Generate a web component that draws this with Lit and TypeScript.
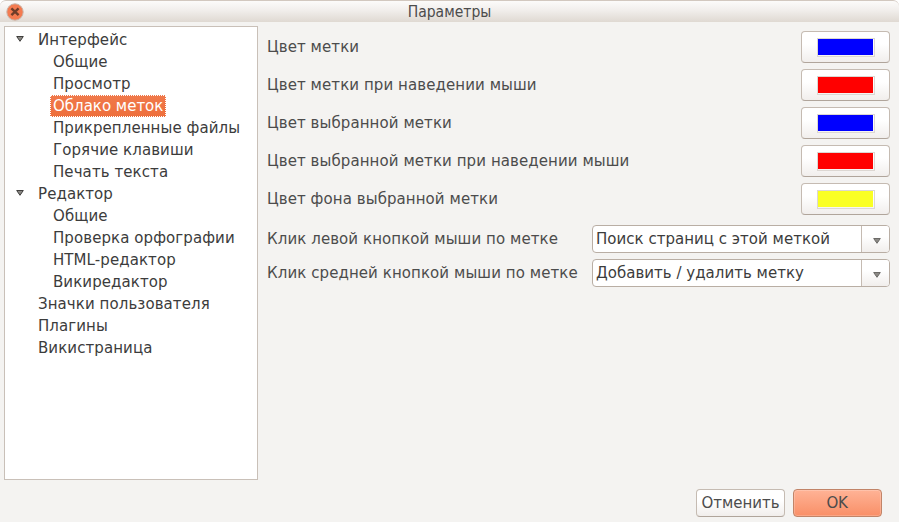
import { LitElement, html, css, svg } from "lit";
import { customElement, state } from "lit/decorators.js";
import { classMap } from "lit/directives/class-map.js";
import { styleMap } from "lit/directives/style-map.js";

interface TreeItem {
  label: string;
  level: number;
  open?: boolean;
}

const TREE: TreeItem[] = [
  { label: "Интерфейс", level: 0, open: true },
  { label: "Общие", level: 1 },
  { label: "Просмотр", level: 1 },
  { label: "Облако меток", level: 1 },
  { label: "Прикрепленные файлы", level: 1 },
  { label: "Горячие клавиши", level: 1 },
  { label: "Печать текста", level: 1 },
  { label: "Редактор", level: 0, open: true },
  { label: "Общие", level: 1 },
  { label: "Проверка орфографии", level: 1 },
  { label: "HTML-редактор", level: 1 },
  { label: "Викиредактор", level: 1 },
  { label: "Значки пользователя", level: 0 },
  { label: "Плагины", level: 0 },
  { label: "Викистраница", level: 0 },
];

const COLORS = [
  { label: "Цвет метки", color: "#0000ff" },
  { label: "Цвет метки при наведении мыши", color: "#ff0000" },
  { label: "Цвет выбранной метки", color: "#0000ff" },
  { label: "Цвет выбранной метки при наведении мыши", color: "#ff0000" },
  { label: "Цвет фона выбранной метки", color: "#faff24" },
];

const ACTIONS = [
  { label: "Клик левой кнопкой мыши по метке", value: "Поиск страниц с этой меткой" },
  { label: "Клик средней кнопкой мыши по метке", value: "Добавить / удалить метку" },
];

@customElement("app-root")
export class AppRoot extends LitElement {
  @state() private selected = 3;

  static styles = css`
    :host {
      display: flex;
      flex-direction: column;
      box-sizing: border-box;
      width: 899px;
      height: 522px;
      overflow: hidden;
      background: #f4f3f1;
      color: #4c4c4c;
      font: 15px/22px "DejaVu Sans", sans-serif;
      white-space: nowrap;
    }
    * {
      box-sizing: border-box;
    }
    svg {
      display: block;
    }
    .corners {
      background: #fff;
      flex: none;
    }
    .titlebar {
      display: grid;
      grid-template-columns: 30px 1fr 30px;
      align-items: center;
      height: 22px;
      border-top: 1px solid #d2c8bf;
      border-radius: 6px 6px 0 0;
      background: linear-gradient(#fcfbfa, #f1eeeb 45%, #dfd9d2);
      text-align: center;
    }
    .title {
      font-size: 15.5px;
      font-family: "DejaVu Sans Condensed", "DejaVu Sans", sans-serif;
      font-stretch: condensed;
    }
    .close {
      padding-left: 6px;
    }
    .body {
      display: flex;
      flex: 1;
      padding: 4px 9px 0 4px;
      gap: 9px;
    }
    .tree {
      width: 254px;
      height: 454px;
      padding: 2px 0 0 10px;
      border: 1px solid #c9c0b8;
      background: #fff;
      color: #3c3c3c;
      letter-spacing: 0.08px;
    }
    .node {
      display: flex;
      align-items: center;
      height: 22px;
    }
    .arrow {
      width: 20px;
      padding: 0 0 3px 1px;
    }
    .child .arrow {
      width: 35px;
    }
    .name {
      height: 22px;
      padding: 0 3px;
      line-height: 23px;
    }
    .selected .name {
      background: linear-gradient(#f0794b, #ee6f3c);
      outline: 1px dotted #fff;
      outline-offset: -1px;
      color: #fff;
      letter-spacing: 0;
    }
    .options {
      flex: 1;
      padding-top: 5px;
    }
    .row {
      display: flex;
      justify-content: space-between;
      align-items: center;
      height: 32px;
      margin-bottom: 6px;
    }
    .label {
      letter-spacing: 0.08px;
    }
    .row.action {
      height: 28px;
    }
    .row.first {
      margin-top: 10px;
    }
    .button {
      display: flex;
      align-items: center;
      justify-content: center;
      width: 89px;
      height: 28px;
      border: 1px solid #c5bbb2;
      border-bottom-color: #b0a59b;
      border-radius: 4px;
      background: linear-gradient(#fff 40%, #f1eeec);
    }
    .pick {
      height: 32px;
    }
    .swatch {
      width: 58px;
      height: 19px;
      border: 1px solid #dcd7d2;
      box-shadow: inset 0 0 0 0 #fff;
      padding: 0 1px 1px 0;
      background-clip: content-box;
    }
    .combo {
      display: flex;
      width: 298px;
      height: 28px;
      border: 1px solid #b9aea4;
      border-radius: 4px;
      background: #fff;
      color: #3c3c3c;
      overflow: hidden;
    }
    .value {
      flex: 1;
      padding: 2px 0 0 3px;
      letter-spacing: 0.02px;
    }
    .drop {
      display: flex;
      align-items: center;
      justify-content: center;
      width: 28px;
      padding: 4px 0 0 2px;
      border-left: 1px solid #c5bbb2;
      background: linear-gradient(#fff 40%, #f1eeec);
    }
    .footer {
      display: flex;
      justify-content: flex-end;
      gap: 8px;
      height: 33px;
      padding-right: 17px;
    }
    .ok {
      padding-right: 1px;
      border-color: #c18468;
      background: linear-gradient(#ffb396, #f98f67);
      box-shadow: inset 0 0 0 1px #ffffff33;
      letter-spacing: -0.3px;
    }
  `;

  private triangle(stroke: string) {
    return html`<svg width="8" height="6" viewBox="0 0 8 6">
      ${svg`<path d="M0.7 0.5H7.3L4 5.3Z" fill="#8b8985" stroke=${stroke}></path>`}
    </svg>`;
  }

  render() {
    return html`
      <div class="corners">
        <div class="titlebar">
          <div class="close">
            <svg width="18" height="18" viewBox="0 0 18 18">
              <circle cx="9" cy="9" r="8.2" fill="#f47b50" stroke="#c9b4a8"></circle>
              <path d="M5.4 5.4L12.6 12.2M12.6 5.4L5.4 12.2" stroke="#6f3d29" stroke-width="2.4"></path>
            </svg>
          </div>
          <div class="title">Параметры</div>
        </div>
      </div>
      <div class="body">
        <div class="tree">
          ${TREE.map(
            (item, i) => html`
              <div
                class=${classMap({ node: true, child: item.level === 1, selected: i === this.selected })}
                @click=${() => (this.selected = i)}
              >
                <div class="arrow">${item.open ? this.triangle("#3f3e3c") : ""}</div>
                <div class="name">${item.label}</div>
              </div>
            `
          )}
        </div>
        <div class="options">
          ${COLORS.map(
            (c) => html`
              <div class="row">
                <div class="label">${c.label}</div>
                <div class="button pick">
                  <div class="swatch" style=${styleMap({ backgroundColor: c.color })}></div>
                </div>
              </div>
            `
          )}
          ${ACTIONS.map(
            (a, i) => html`
              <div class=${classMap({ row: true, action: true, first: i === 0 })}>
                <div class="label">${a.label}</div>
                <div class="combo">
                  <div class="value">${a.value}</div>
                  <div class="drop">${this.triangle("#6b6966")}</div>
                </div>
              </div>
            `
          )}
        </div>
      </div>
      <div class="footer">
        <div class="button">Отменить</div>
        <div class="button ok">OK</div>
      </div>
    `;
  }
}
